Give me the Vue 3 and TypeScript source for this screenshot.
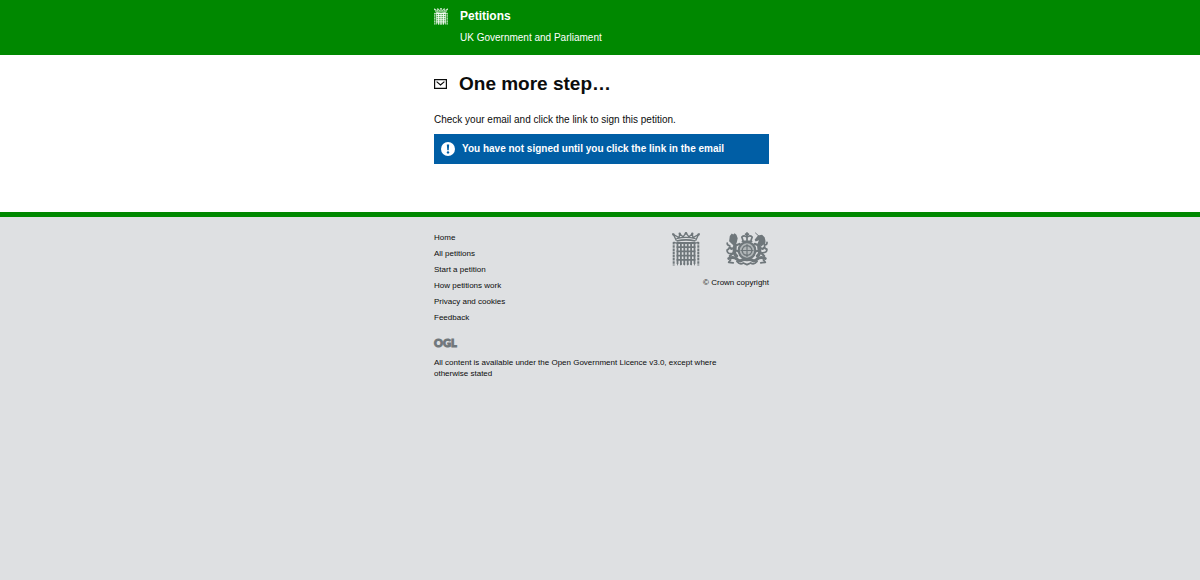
<script setup lang="ts">
interface FooterLink {
  label: string
  href: string
}

const footerLinks: FooterLink[] = [
  { label: 'Home', href: '#home' },
  { label: 'All petitions', href: '#petitions' },
  { label: 'Start a petition', href: '#start' },
  { label: 'How petitions work', href: '#help' },
  { label: 'Privacy and cookies', href: '#privacy' },
  { label: 'Feedback', href: '#feedback' },
]
</script>

<template>
  <div class="page">
    <svg class="sprite" aria-hidden="true">
      <symbol id="portcullis" viewBox="0 0 28 34">
        <g fill="none" stroke="currentColor">
          <path stroke-width="1.8" d="M5.5 10V31.5M8.9 10V33M12.3 10V33M15.7 10V33M19.1 10V33M22.5 10V31.5" />
          <path stroke-width="1.8" d="M4.6 11H23.4M4.6 15.2H23.4M4.6 19.4H23.4M4.6 23.6H23.4M4.6 27.8H23.4" />
          <path stroke-width="1.7" d="M4.6 9Q14 6.8 23.4 9" />
          <path stroke-width="1.3" d="M4.4 6.6Q14 4 23.6 6.6M4.4 8.8L1.4 2.4L7 5.5L7.8 2L11 4.8L14 1L17 4.8L20.2 2L21 5.5L26.6 2.4L23.6 8.8" />
          <path stroke-width="2" stroke-dasharray="2.6 .6" d="M1.7 10V33.500M26.3 10V33.500" />
          <path stroke-width="1.2" d="M1.5 10L4.800 11.400M26.500 10L23.200 11.400" />
        </g>
        <path fill="currentColor" d="M4.600 31h1.800l-.9 3zM8 31h1.800l-.9 3zM11.400 31h1.800l-.9 3zM14.800 31h1.800l-.9 3zM18.200 31h1.800l-.9 3zM21.600 31h1.800l-.9 3z" />
        <g fill="currentColor">
          <circle cx="1.400" cy="2.400" r="1.200" />
          <circle cx="7.700" cy="1.800" r="1.200" />
          <circle cx="14" cy="1.300" r="1.300" />
          <circle cx="20.300" cy="1.800" r="1.200" />
          <circle cx="26.600" cy="2.400" r="1.200" />
        </g>
      </symbol>
    </svg>

    <header class="banner">
      <div class="wrap brand">
        <svg class="brand-icon" aria-hidden="true"><use href="#portcullis" /></svg>
        <div>
          <a class="brand-name" href="#home">Petitions</a>
          <p class="brand-sub">UK Government and Parliament</p>
        </div>
      </div>
    </header>

    <main class="wrap content">
      <h1 class="title">
        <svg class="mail-icon" viewBox="0 0 13 10" aria-hidden="true">
          <path d="M.6.6h11.800v8.800H.6zM2.600 2.600L6.500 6l3.900-3.400" fill="none" stroke="currentColor" stroke-width="1.200" />
        </svg>
        One more step…
      </h1>
      <p class="lead">Check your email and click the link to sign this petition.</p>
      <p class="notice" role="status">
        <svg class="notice-icon" viewBox="0 0 14 14" aria-hidden="true">
          <circle cx="7" cy="7" r="7" fill="#fff" />
          <path d="M5.800 2.500h2.400l-.5 5.700H6.300z" fill="#005ea5" />
          <circle cx="7" cy="10.400" r="1.200" fill="#005ea5" />
        </svg>
        <strong>You have not signed until you click the link in the email</strong>
      </p>
    </main>

    <footer class="footer">
      <div class="wrap">
        <div class="footer-top">
          <nav aria-label="Footer">
            <ul class="links">
              <li v-for="link in footerLinks" :key="link.label">
                <a :href="link.href">{{ link.label }}</a>
              </li>
            </ul>
          </nav>
          <div class="crests">
            <div class="crest-row">
              <svg class="crest-parliament" role="img" aria-label="Parliament"><use href="#portcullis" /></svg>
              <svg class="crest-arms" viewBox="0 0 42 34" role="img" aria-label="Government">
                <circle cx="21" cy="18.500" r="8" fill="currentColor" fill-opacity=".4" />
                <g fill="none" stroke="currentColor" stroke-linecap="round" stroke-linejoin="round">
                  <circle cx="21" cy="18.500" r="8.300" stroke-width="2.200" />
                  <path stroke-width="1.200" d="M21 12.500v12M15 18.500h12" />
                  <circle cx="21" cy="18.500" r="4.800" stroke-width="1.400" stroke-dasharray="2 1" />
                  <path stroke-width="1.700" d="M16.400 9.400h9.200M17 8.600L15.800 5q2.400-2.400 5.200.3q2.800-2.700 5.200-.3L25 8.600M21 4.800v4M21 .9v3.200M19.600 2.200h2.800" />
                  <path stroke-width="3.400" d="M7.600 9q2.400 5 .9 9q-1 3.500 2 6" />
                  <path stroke-width="2.200" d="M9.500 13.500l4-1.500M10 18.500l2.600 1M7.800 20.500l-4 3.500M8 15q-2 3-3.400 1" />
                  <path stroke-width="1.700" d="M5.600 21.500q-4.600.5-4.600-3.500q2.400-.8 2.800-4.200q-2.800-.4-2.600-2.600" />
                  <path stroke-width="3.200" d="M34.400 9q-2.800 5-.9 9q1 3.500-2 6" />
                  <path stroke-width="2.200" d="M33 13.500l-4.200-1.600M33 18.500l-3.600 1M34.600 20.500l3.600 3.500M34 15q2 3 3.600 1" />
                  <path stroke-width="1.700" d="M36.400 20.800q4.800 0 4.500-3.600q-2.900-.5-2.300-4q2.600-.5 2.400-2.800M37.500 6q2 2.500.5 6" />
                  <path stroke-width="1" d="M33 4.200L29.500 1" />
                  <path stroke-width="3" d="M2.800 26.500q4.500-2 8 .5q2 2.200 4.200 1.600q2.600-1.600 6-.8q3.400-.8 6 .8q2.200.6 4.200-1.600q3.500-2.500 8-.5" />
                  <path stroke-width="1.800" d="M4.500 28l-1.800 2.300l4.500.5M37.500 28l1.800 2.300l-4.500.5M11 29.500q3 3.500 6.300 1.500l3.700 1.600l3.700-1.600q3.300 2 6.300-1.500" />
                </g>
                <g fill="currentColor">
                  <path d="M3.800 4l2-2.600 1.400 1.100L8.600 1.300l1.800 1.500 1.300 3.400-1 4.500-4 2-3.600-3.400z" />
                  <path d="M32 3.500l4-.8 2.600 2.500.4 6-3.600 3.200-3-2.300.8-3.900-3.600 1.300-1-1.800z" />
                </g>
              </svg>
            </div>
            <p class="copyright">© Crown copyright</p>
          </div>
        </div>
        <a class="ogl" href="#ogl">OGL</a>
        <p class="licence">All content is available under the Open Government Licence v3.0, except where otherwise stated</p>
      </div>
    </footer>
  </div>
</template>

<style>
html,
body {
  margin: 0;
  background: #dee0e2;
}
</style>

<style scoped>
.page {
  font-family: "Liberation Sans", Arial, sans-serif;
  font-size: 10px;
  line-height: 12px;
  color: #0b0c0c;
}

.page a {
  color: inherit;
  text-decoration: none;
}

.page p {
  margin: 0;
}

.sprite {
  display: none;
}

.wrap {
  box-sizing: border-box;
  max-width: 338px;
  margin: 0 auto;
  padding-left: 3px;
}

.banner {
  background: #008800;
  color: #fff;
}

.brand {
  display: flex;
  gap: 12px;
  padding-top: 8px;
  padding-bottom: 11px;
}

.brand-icon {
  width: 14px;
  height: 17px;
}

.brand-name {
  display: block;
  font-size: 12px;
  font-weight: bold;
  line-height: 16px;
}

.page .brand-sub {
  margin-top: 8px;
}

.content {
  padding-bottom: 48px;
  background: #fff;
  box-shadow: 0 0 0 100vmax #fff;
  clip-path: inset(0 -100vmax);
}

.title {
  display: flex;
  align-items: center;
  gap: 12px;
  margin: 0;
  padding: 17px 0 18px;
  font-size: 19px;
  line-height: 24px;
}

.mail-icon {
  width: 13px;
  height: 10px;
}

.page .lead {
  padding-bottom: 8px;
}

.notice {
  display: flex;
  align-items: center;
  gap: 7px;
  padding: 8px 7px;
  background: #005ea5;
  color: #fff;
}

.notice-icon {
  width: 14px;
  height: 14px;
}

.footer {
  padding: 15px 0;
  border-top: 5px solid #008800;
  background: #dee0e2;
  font-size: 8px;
}

.footer-top {
  display: flex;
  justify-content: space-between;
}

.links {
  display: grid;
  gap: 4px;
  margin: 0;
  padding: 0;
  list-style: none;
}

.crests {
  display: flex;
  flex-direction: column;
  align-items: flex-end;
  gap: 11px;
}

.crest-row {
  display: flex;
  gap: 26px;
  padding-right: 1px;
  color: #6f777b;
}

.crest-parliament {
  width: 28px;
  height: 34px;
}

.crest-arms {
  width: 42px;
  height: 34px;
}

.page .ogl {
  display: block;
  width: max-content;
  margin-top: 13px;
  font-family: Lato, "Liberation Sans", sans-serif;
  font-size: 11px;
  font-weight: 900;
  color: #6f777b;
  -webkit-text-stroke: 1px #6f777b;
}

.page .licence {
  max-width: 300px;
  margin-top: 8px;
  line-height: 11px;
}
</style>
